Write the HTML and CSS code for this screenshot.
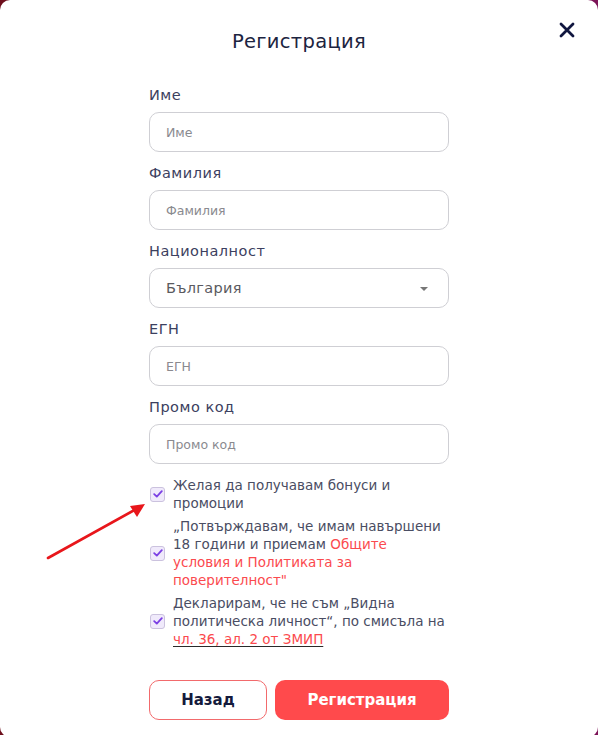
FILE: index.html
```html
<!DOCTYPE html>
<html lang="bg">
<head>
<meta charset="utf-8">
<title>Регистрация</title>
<link rel="stylesheet" href="styles.css">
</head>
<body>
<div class="backdrop">
  <div class="modal">
    <button class="close" aria-label="Затвори">
      <svg width="16" height="16" viewBox="0 0 16 16"><path d="M2 2 L14 14 M14 2 L2 14" stroke="#10163f" stroke-width="2.8" stroke-linecap="round" fill="none"/></svg>
    </button>
    <h1 class="title">Регистрация</h1>
    <form class="form">
      <div class="field">
        <label class="label">Име</label>
        <div class="input"><span class="ph">Име</span></div>
      </div>
      <div class="field">
        <label class="label">Фамилия</label>
        <div class="input"><span class="ph">Фамилия</span></div>
      </div>
      <div class="field">
        <label class="label">Националност</label>
        <div class="input select"><span class="val">България</span><span class="caret"></span></div>
      </div>
      <div class="field">
        <label class="label">ЕГН</label>
        <div class="input"><span class="ph">ЕГН</span></div>
      </div>
      <div class="field">
        <label class="label">Промо код</label>
        <div class="input"><span class="ph">Промо код</span></div>
      </div>
      <div class="checks">
        <div class="check">
          <span class="box"><svg width="10" height="8" viewBox="0 0 10 8"><path d="M1.2 4.2 L3.8 6.6 L8.8 1.2" stroke="#7b3fe4" stroke-width="1.8" fill="none" stroke-linecap="round" stroke-linejoin="round"/></svg></span>
          <span class="ctext">Желая да получавам бонуси и промоции</span>
        </div>
        <div class="check">
          <span class="box"><svg width="10" height="8" viewBox="0 0 10 8"><path d="M1.2 4.2 L3.8 6.6 L8.8 1.2" stroke="#7b3fe4" stroke-width="1.8" fill="none" stroke-linecap="round" stroke-linejoin="round"/></svg></span>
          <span class="ctext">„Потвърждавам, че имам навършени 18 години и приемам <span class="red">Общите<br>условия и Политиката за<br>поверителност"</span></span>
        </div>
        <div class="check">
          <span class="box"><svg width="10" height="8" viewBox="0 0 10 8"><path d="M1.2 4.2 L3.8 6.6 L8.8 1.2" stroke="#7b3fe4" stroke-width="1.8" fill="none" stroke-linecap="round" stroke-linejoin="round"/></svg></span>
          <span class="ctext">Декларирам, че не съм „Видна политическа личност“, по смисъла на <span class="red ul">чл. 36, ал. 2 от ЗМИП</span></span>
        </div>
      </div>
      <div class="buttons">
        <button type="button" class="btn back">Назад</button>
        <button type="button" class="btn primary">Регистрация</button>
      </div>
    </form>
    <svg class="arrow" width="110" height="70" viewBox="0 0 110 70">
      <path d="M2 62 L92 12" stroke="#e8161b" stroke-width="2.6" stroke-linecap="round" fill="none"/>
      <path d="M99 8 L84 10 L91 21 Z" fill="#e8161b"/>
    </svg>
  </div>
</div>
</body>
</html>
```

FILE: styles.css
```css
* { box-sizing: border-box; }
html, body { margin: 0; padding: 0; }
body {
  width: 598px;
  height: 735px;
  overflow: hidden;
  font-family: "DejaVu Sans", "Open Sans", sans-serif;
}
.backdrop {
  width: 598px;
  height: 735px;
  background: linear-gradient(90deg, #6e0f1c 0%, #5a1a30 50%, #7d1458 100%);
}
.modal {
  position: relative;
  width: 598px;
  height: 737px;
  background: #fff;
  border-radius: 10px;
  padding-top: 30px;
  display: flex;
  flex-direction: column;
  align-items: center;
}
.close {
  position: absolute;
  top: 22px;
  left: 559px;
  width: 16px;
  height: 16px;
  padding: 0;
  border: 0;
  background: none;
  display: flex;
}
.title {
  margin: 0;
  font-size: 19.5px;
  line-height: 24px;
  font-weight: 500;
  color: #1c2440;
  letter-spacing: 0.3px;
}
.form {
  width: 300px;
  margin-top: 32px;
  display: flex;
  flex-direction: column;
}
.field {
  display: flex;
  flex-direction: column;
  gap: 8px;
  margin-bottom: 12px;
}
.label {
  font-size: 14.5px;
  line-height: 18px;
  letter-spacing: 0.5px;
  color: #3c4060;
}
.input {
  height: 40px;
  border: 1px solid #cfcfd4;
  border-radius: 10px;
  padding: 0 16px;
  display: flex;
  align-items: center;
}
.ph {
  font-size: 12.5px;
  color: #8a8a8f;
}
.select { justify-content: space-between; padding-right: 20px; }
.val {
  font-size: 14.5px;
  letter-spacing: 0.3px;
  color: #5a5a60;
}
.caret {
  width: 0;
  height: 0;
  border-left: 4px solid transparent;
  border-right: 4px solid transparent;
  border-top: 4px solid #777;
  margin-top: 2px;
}
.checks {
  display: flex;
  flex-direction: column;
  gap: 5px;
}
.check {
  display: flex;
  align-items: center;
  gap: 8px;
}
.box {
  flex: none;
  width: 15px;
  height: 15px;
  margin-left: 1px;
  border: 1px solid #cbc2de;
  background: #f0eafb;
  border-radius: 3px;
  display: flex;
  align-items: center;
  justify-content: center;
}
.ctext {
  font-size: 13.5px;
  line-height: 18px;
  color: #4a4d63;
}
.red { color: #fb4a4e; }
.ul {
  text-decoration: underline;
  text-decoration-color: #2a2a2a;
  text-underline-offset: 2px;
}
.buttons {
  margin-top: 32px;
  display: flex;
  gap: 8px;
}
.btn {
  height: 40px;
  border-radius: 10px;
  font-family: inherit;
  font-size: 15px;
  font-weight: 700;
  cursor: pointer;
}
.back {
  width: 118px;
  background: #fff;
  border: 1px solid #f26a6c;
  color: #141a3c;
}
.primary {
  width: 174px;
  background: #ff4a4c;
  border: 0;
  color: #fff;
}
.arrow {
  position: absolute;
  left: 46px;
  top: 496px;
}
```
